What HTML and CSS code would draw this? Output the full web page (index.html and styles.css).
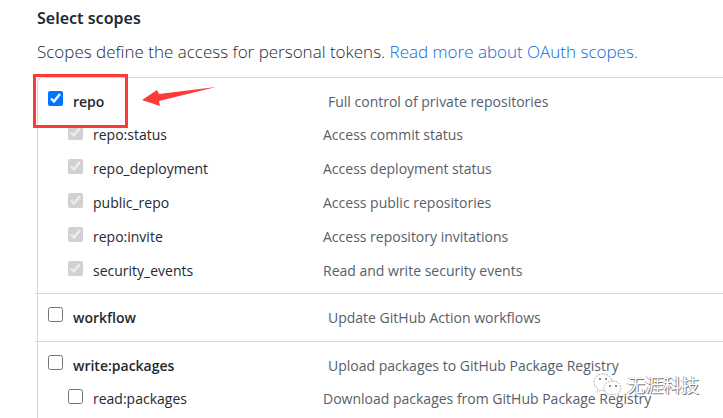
FILE: index.html
```
<!DOCTYPE html>
<html>
<head lang="en">
    <meta charset="UTF-8">
    <title>Select scopes</title>
    <link rel="stylesheet" href="styles.css">
</head>
<body>
<div id="container">
    <h2>Select scopes</h2>
    <p class="note">Scopes define the access for personal tokens. <a href="#">Read more about OAuth scopes.</a></p>
    <ul class="scopes">
        <li class="group">
            <div class="row main">
                <input type="checkbox" id="repo" checked>
                <label for="repo">repo</label>
                <span class="desc">Full control of private repositories</span>
            </div>
            <ul class="children">
                <li class="row">
                    <input type="checkbox" id="repo-status" checked disabled>
                    <label for="repo-status">repo:status</label>
                    <span class="desc">Access commit status</span>
                </li>
                <li class="row">
                    <input type="checkbox" id="repo-deployment" checked disabled>
                    <label for="repo-deployment">repo_deployment</label>
                    <span class="desc">Access deployment status</span>
                </li>
                <li class="row">
                    <input type="checkbox" id="public-repo" checked disabled>
                    <label for="public-repo">public_repo</label>
                    <span class="desc">Access public repositories</span>
                </li>
                <li class="row">
                    <input type="checkbox" id="repo-invite" checked disabled>
                    <label for="repo-invite">repo:invite</label>
                    <span class="desc">Access repository invitations</span>
                </li>
                <li class="row">
                    <input type="checkbox" id="security-events" checked disabled>
                    <label for="security-events">security_events</label>
                    <span class="desc">Read and write security events</span>
                </li>
            </ul>
        </li>
        <li class="group">
            <div class="row main">
                <input type="checkbox" id="workflow">
                <label for="workflow">workflow</label>
                <span class="desc">Update GitHub Action workflows</span>
            </div>
        </li>
        <li class="group">
            <div class="row main">
                <input type="checkbox" id="write-packages">
                <label for="write-packages">write:packages</label>
                <span class="desc">Upload packages to GitHub Package Registry</span>
            </div>
            <ul class="children">
                <li class="row">
                    <input type="checkbox" id="read-packages">
                    <label for="read-packages">read:packages</label>
                    <span class="desc">Download packages from GitHub Package Registry</span>
                </li>
            </ul>
        </li>
    </ul>
</div>
<div class="mark"></div>
<svg class="arrow" width="76" height="22" viewBox="0 0 76 22">
    <path d="M0 14 L15 4 L17 8 L74 1 L17 15 L18 20 Z" fill="#fc3a37"/>
</svg>
<div class="watermark">
    <svg width="30" height="25" viewBox="0 0 30 25" fill="#fff" stroke="#b4b7ba" stroke-width="1" stroke-dasharray="2 1">
        <path d="M10 1 C4 1 1 5 1 9 C1 12 3 14 5 16 L4 19 L8 17 L12 18 C17 17 20 13 19 8 C18 4 15 1 10 1 Z"/>
        <path d="M20 8 C15 8 11 11 11 15 C11 20 16 23 22 21 L26 23 L25 20 C27 19 28 17 28 15 C28 11 24 8 20 8 Z"/>
        <g fill="#666" stroke="none">
            <circle cx="7" cy="6" r="1"/>
            <circle cx="13" cy="6" r="1"/>
            <circle cx="17" cy="13" r="1"/>
            <circle cx="23" cy="13" r="1"/>
        </g>
    </svg>
    <span>无涯科技</span>
</div>
</body>
</html>
```
FILE: styles.css
```
*{
    padding: 0;
    margin: 0;
    box-sizing: border-box;
}
html{
    overflow: hidden;
}
body{
    position: relative;
    font-family: "Open Sans", "Noto Sans CJK SC", sans-serif;
    font-size: 14px;
    color: #24292f;
    background: #fff;
}
ul{
    list-style: none;
}
a{
    color: #0969da;
    text-decoration: none;
}
#container{
    padding: 6px 0 0 37px;
}
h2{
    font-family: "Noto Sans", sans-serif;
    font-size: 16px;
    line-height: 24px;
    font-weight: 600;
}
.note{
    margin: 10px 0 13px;
    font-size: 17px;
    line-height: 24px;
    font-weight: 300;
    white-space: nowrap;
}
.scopes{
    border: 1px solid #d0d7de;
    border-width: 1px 0 0 1px;
    border-top-left-radius: 6px;
}
.group{
    margin-left: -3px;
    padding: 6px 0 7px 13px;
}
.group + .group{
    border-top: 1px solid #d0d7de;
}
.row{
    display: flex;
    align-items: center;
    height: 33px;
    white-space: nowrap;
}
.row input{
    flex: none;
    width: 15px;
    height: 15px;
    margin: 0 10px 5px 0;
}
.row label{
    flex: 0 0 230px;
}
.main{
    height: 34px;
}
.main label{
    flex-basis: 255px;
    font-weight: 600;
}
.desc{
    color: #57606a;
}
.children{
    display: grid;
    gap: 1px;
    margin-bottom: -1px;
    padding-left: 20px;
}
.mark{
    position: absolute;
    left: 33px;
    top: 74px;
    width: 95px;
    height: 54px;
    border: 3px solid #fc3a37;
}
.arrow{
    position: absolute;
    left: 142px;
    top: 86px;
}
.watermark{
    position: absolute;
    left: 593px;
    top: 373px;
    display: flex;
    gap: 4px;
    font-size: 18px;
    line-height: 24px;
    color: #fff;
    text-shadow: 1px 1px 0 #777, -1px 0 0 #aaa;
}
```
